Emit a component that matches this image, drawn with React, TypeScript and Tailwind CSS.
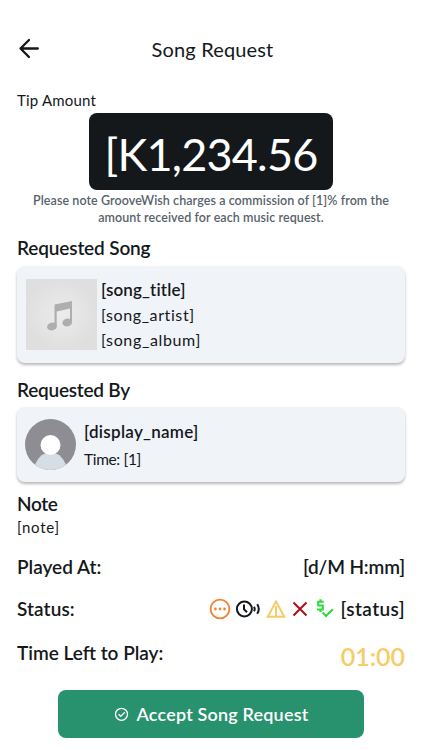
import type { ReactNode } from "react";

const Card = ({ className, children }: { className: string; children: ReactNode }) => (
  <div
    className={`flex items-center rounded-lg bg-[#f0f3f8] shadow-[0_2px_3px_rgba(0,0,0,0.28)] ${className}`}
  >
    {children}
  </div>
);

const BackArrow = () => (
  <svg className="-mt-0.5 ml-px" width="22" height="22" viewBox="0 0 22 22" fill="none" stroke="#14181b" strokeWidth="2.3" strokeLinecap="round" strokeLinejoin="round">
    <path d="M19.8 11.5H2.5M11 3L2.5 11.5L11 20" />
  </svg>
);

const AlbumCover = () => (
  <svg width="71" height="71" viewBox="0 0 71 71">
    <defs>
      <radialGradient id="cover">
        <stop offset="0" stopColor="#ececec" />
        <stop offset="1" stopColor="#dfdfdf" />
      </radialGradient>
    </defs>
    <rect width="71" height="71" fill="url(#cover)" />
    <g fill="#aeaeae">
      <path d="M28.5 25.5L46 22V43.5H44V29.5L30.7 32.5V47H28.5Z" />
      <ellipse cx="26" cy="47.5" rx="5" ry="3.8" transform="rotate(-15 26 47.5)" />
      <ellipse cx="41.3" cy="43.5" rx="5" ry="3.8" transform="rotate(-15 41.3 43.5)" />
    </g>
  </svg>
);

const Avatar = () => (
  <svg width="51" height="51" viewBox="0 0 51 51">
    <clipPath id="avatar">
      <circle cx="25.5" cy="25.5" r="25.5" />
    </clipPath>
    <g clipPath="url(#avatar)">
      <rect width="51" height="51" fill="#8d8d93" />
      <ellipse cx="25.5" cy="51" rx="16" ry="17.5" fill="#d5dee7" />
      <circle cx="25.5" cy="26" r="10" fill="#fff" />
    </g>
  </svg>
);

const StatusIcons = () => (
  <div className="flex items-center">
    <svg width="22" height="22" viewBox="0 0 22 22" fill="none" stroke="#f08437" strokeWidth="1.9">
      <circle cx="11" cy="11" r="9.4" />
      <g fill="#f08437" stroke="none">
        <circle cx="6.4" cy="11" r="1.4" />
        <circle cx="11" cy="11" r="1.4" />
        <circle cx="15.6" cy="11" r="1.4" />
      </g>
    </svg>
    <svg className="ml-1" width="28" height="22" viewBox="0 0 28 22" fill="none" stroke="#14181b" strokeWidth="2">
      <circle cx="9.4" cy="11" r="7.5" />
      <path d="M9 6.5V11.3L12 14.2" />
      <path d="M19 8.7Q20.4 11 19 13.3M22.2 6.3Q25.4 11 22.2 15.7" />
    </svg>
    <svg className="ml-0.5" width="22" height="22" viewBox="0 0 22 22" fill="none" stroke="#f6cc68" strokeWidth="2">
      <path d="M11 3.5L19.3 18.8H2.7Z" />
      <path d="M11 8V18" />
    </svg>
    <svg className="ml-0.5" width="22" height="22" viewBox="0 0 22 22" fill="none" stroke="#ad1118" strokeWidth="2">
      <path d="M4.5 4.5L17.5 17.5M17.5 4.5L4.5 17.5" />
    </svg>
    <svg className="ml-1" width="22" height="22" viewBox="0 0 22 22" fill="none" stroke="#2bdd3f" strokeWidth="2.1">
      <path d="M8.8 3.7H3.2V7.5H7.8V11.5H2M5.5 1.2V4M5.5 11.5V14" />
      <path d="M7.6 14.6L11 18L17.8 11.2" />
    </svg>
  </div>
);

const App = () => {
  return (
    <div className="flex h-[750px] w-[422px] flex-col bg-white px-[17px] pt-[35px] font-['Lato',sans-serif] text-[#14181b]">
      {/* Header */}
      <header className="grid h-7 grid-cols-[24px_1fr_24px] items-center">
        <BackArrow />
        <h1 className="whitespace-nowrap pl-[3px] text-center text-[20px] leading-7 tracking-[0.15px]">Song Request</h1>
      </header>

      {/* Tip */}
      <p className="mt-7 h-[22px] text-[15px] leading-[18px] tracking-[0.2px]">Tip Amount</p>
      <div className="flex h-[77px] w-[244px] items-center justify-center self-center rounded-lg bg-[#14181b] pt-1.5">
        <span className="whitespace-nowrap text-[45px] leading-none tracking-[-0.8px] text-white">[K1,234.56</span>
      </div>
      <p className="mt-0.5 h-[34px] whitespace-nowrap text-center text-[12.5px] font-semibold leading-[17px] tracking-[0.07px] text-[#57636c]">
        Please note GrooveWish charges a commission of [1]% from the
        <br />
        amount received for each music request.
      </p>

      {/* Song */}
      <h2 className="mt-[10px] h-[30px] text-[19px] font-semibold leading-6 tracking-[-0.15px]">Requested Song</h2>
      <Card className="h-[97px] gap-1 pl-[9px]">
        <AlbumCover />
        <div className="flex flex-col pt-px">
          <p className="h-[25px] text-[17px] font-semibold leading-6 tracking-[0.15px]">[song_title]</p>
          <p className="h-[25px] text-base leading-6 tracking-[0.6px]">[song_artist]</p>
          <p className="h-[25px] text-base leading-6 tracking-[0.65px]">[song_album]</p>
        </div>
      </Card>

      {/* Requester */}
      <h2 className="mt-[15px] h-[29px] text-[19px] font-semibold leading-6 tracking-[-0.25px]">Requested By</h2>
      <Card className="h-[75px] gap-2 pl-2">
        <Avatar />
        <div className="flex flex-col pt-0.5">
          <p className="h-[27px] text-[17px] font-semibold leading-6 tracking-[0.28px]">[display_name]</p>
          <p className="h-6 text-[15.5px] leading-6 tracking-[-0.35px]">Time: [1]</p>
        </div>
      </Card>

      {/* Details */}
      <h2 className="mt-[10px] text-[19px] font-semibold leading-6 tracking-[-0.4px]">Note</h2>
      <p className="text-[15px] leading-[22px] tracking-[0.75px]">[note]</p>
      <div className="mt-[17px] flex h-6 items-center justify-between text-[19px] font-semibold">
        <span>Played At:</span>
        <span className="tracking-[-0.15px]">[d/M H:mm]</span>
      </div>
      <div className="mt-[18px] flex h-6 items-center justify-between text-[19px] font-semibold">
        <span className="tracking-[0.1px]">Status:</span>
        <div className="flex items-center gap-1">
          <StatusIcons />
          <span className="tracking-[0.4px]">[status]</span>
        </div>
      </div>
      <div className="mt-5 flex h-8 items-start justify-between text-[19px] font-semibold leading-6">
        <span>Time Left to Play:</span>
        <span className="text-[25px] leading-[30px] text-[#f6cc68]">01:00</span>
      </div>

      <button className="mt-[17px] flex h-12 w-[306px] items-center justify-center gap-2 self-center rounded-lg bg-[#28916d] text-white">
        <svg width="15" height="15" viewBox="0 0 15 15" fill="none" stroke="currentColor" strokeWidth="1.3">
          <circle cx="7.5" cy="7.3" r="6" />
          <path d="M4.6 7.3L6.7 9.4L10.8 5.2" />
        </svg>
        <span className="text-lg font-semibold leading-6 tracking-[0.18px]">Accept Song Request</span>
      </button>
    </div>
  );
};

export default App;
